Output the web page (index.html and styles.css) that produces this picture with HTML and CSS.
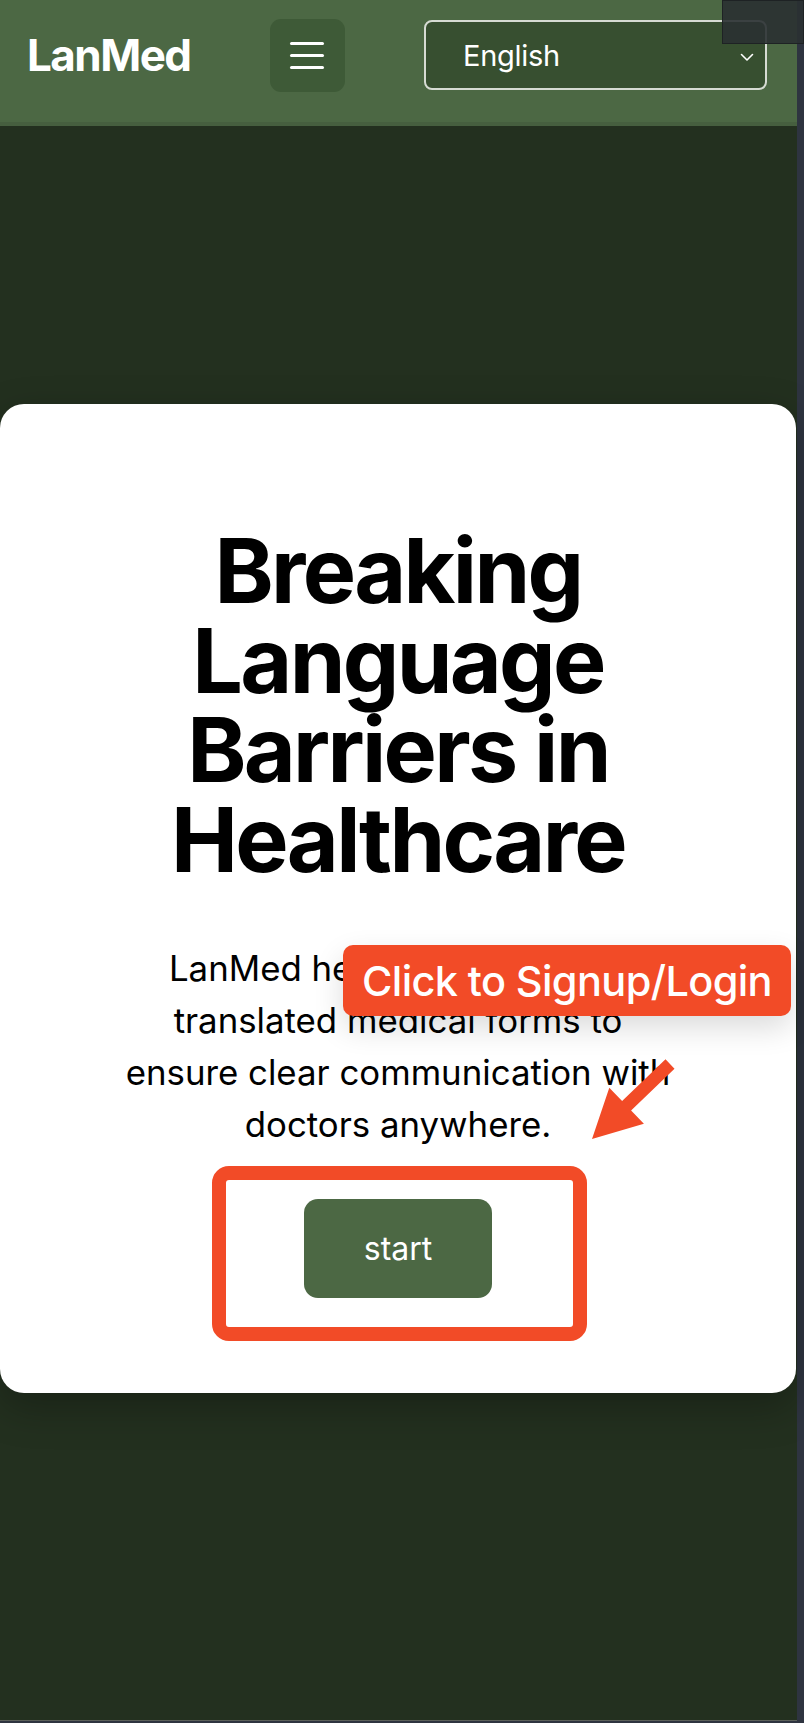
FILE: index.html
```html
<!DOCTYPE html>
<html lang="en">
<head>
<meta charset="utf-8">
<title>LanMed</title>
<link rel="stylesheet" href="styles.css">
</head>
<body>
  <div class="page">
    <header class="topbar">
      <a class="logo" href="#">LanMed</a>
      <button class="menu-btn" aria-label="Menu">
        <span class="menu-line"></span>
        <span class="menu-line"></span>
        <span class="menu-line"></span>
      </button>
      <div class="lang-select">
        <span class="lang-value">English</span>
        <svg class="lang-chevron" width="14" height="9" viewBox="0 0 14 9"><path d="M1.5 1.5 L7 7 L12.5 1.5" fill="none" stroke="#ffffff" stroke-width="1.6" stroke-linecap="round" stroke-linejoin="round"/></svg>
      </div>
    </header>
    <main class="hero">
      <section class="card">
        <h1 class="hero-title">Breaking Language Barriers in Healthcare</h1>
        <p class="hero-text">LanMed helps users access translated medical forms to ensure clear communication with doctors anywhere.</p>
        <div class="cta-row">
          <button class="start-btn">start</button>
        </div>
      </section>
    </main>
  </div>

  <div class="annotation callout">Click to Signup/Login</div>
  <svg class="annotation arrow" width="100" height="92" viewBox="0 0 100 92">
    <polygon points="80.5,4.3 37.1,46 24.3,32.7 7,84 58.9,68.7 46.1,55.4 89.5,13.7" fill="#f24b27"/>
  </svg>
  <div class="annotation highlight-box"></div>
  <div class="window-overlay"></div>
</body>
</html>
```

FILE: styles.css
```css
* { box-sizing: border-box; }

html {
  background: #2e3440;
}

body {
  margin: 0;
  font-family: Inter, "Noto Sans", "Liberation Sans", sans-serif;
  position: relative;
  width: 804px;
  height: 1723px;
  overflow: hidden;
  background: #2e3440;
}

.page {
  width: 797px;
  height: 1721px;
  background: #23301f;
  border-bottom: 1px solid #5b605a;
  display: flex;
  flex-direction: column;
}

.topbar {
  height: 126px;
  flex: none;
  background: #4c6844;
  border-bottom: 4px solid #465f3f;
  display: flex;
  align-items: center;
  justify-content: space-between;
  padding: 0 30px 12px 27px;
}

.logo {
  color: #ffffff;
  text-decoration: none;
  font-weight: 700;
  font-size: 44px;
  letter-spacing: -0.035em;
  line-height: 1;
}

.menu-btn {
  width: 75px;
  height: 73px;
  border: none;
  border-radius: 11px;
  background: #3e5a37;
  display: flex;
  flex-direction: column;
  align-items: center;
  justify-content: center;
  gap: 9px;
  padding: 0;
}

.menu-line {
  display: block;
  width: 34px;
  height: 3px;
  border-radius: 2px;
  background: #ffffff;
}

.lang-select {
  width: 343px;
  height: 70px;
  border: 2px solid #d6dbd3;
  border-radius: 8px;
  background: #374f30;
  display: flex;
  align-items: center;
  justify-content: space-between;
  padding: 0 11px 0 37px;
}

.lang-value {
  color: #ffffff;
  font-size: 29px;
  letter-spacing: -0.01em;
}

.lang-chevron {
  margin-top: 4px;
}

.hero {
  flex: 1;
  padding-top: 278px;
}

.card {
  width: 796px;
  background: #ffffff;
  border-radius: 24px;
  box-shadow: 0 14px 40px rgba(0, 0, 0, 0.28);
  padding: 122px 40px 95px;
  display: flex;
  flex-direction: column;
  align-items: center;
  text-align: center;
}

.hero-title {
  margin: 0;
  color: #000000;
  font-size: 89.6px;
  line-height: 1;
  font-weight: 700;
  letter-spacing: -0.03em;
  max-width: 600px;
}

.hero-text {
  margin: 58px 0 0;
  color: #000000;
  font-size: 34.8px;
  line-height: 52px;
  max-width: 550px;
}

.cta-row {
  margin-top: 49px;
}

.start-btn {
  width: 188px;
  height: 99px;
  border: none;
  border-radius: 14px;
  background: #4c6844;
  color: #ffffff;
  font-family: inherit;
  font-size: 32px;
}

.annotation {
  position: absolute;
}

.callout {
  left: 343px;
  top: 945px;
  width: 448px;
  height: 71px;
  background: #f24b27;
  border-radius: 10px;
  color: #ffffff;
  font-size: 41.5px;
  font-weight: 500;
  letter-spacing: -0.015em;
  display: flex;
  align-items: center;
  justify-content: center;
  box-shadow: 0 12px 30px rgba(0, 0, 0, 0.14);
}

.arrow {
  left: 585px;
  top: 1055px;
}

.highlight-box {
  left: 212px;
  top: 1166px;
  width: 375px;
  height: 175px;
  border: 14px solid #f24b27;
  border-radius: 17px;
}

.window-overlay {
  position: absolute;
  left: 722px;
  top: 0;
  width: 82px;
  height: 44px;
  background: rgba(42, 48, 50, 0.9);
  border: 1px solid #1e2224;
}
```
